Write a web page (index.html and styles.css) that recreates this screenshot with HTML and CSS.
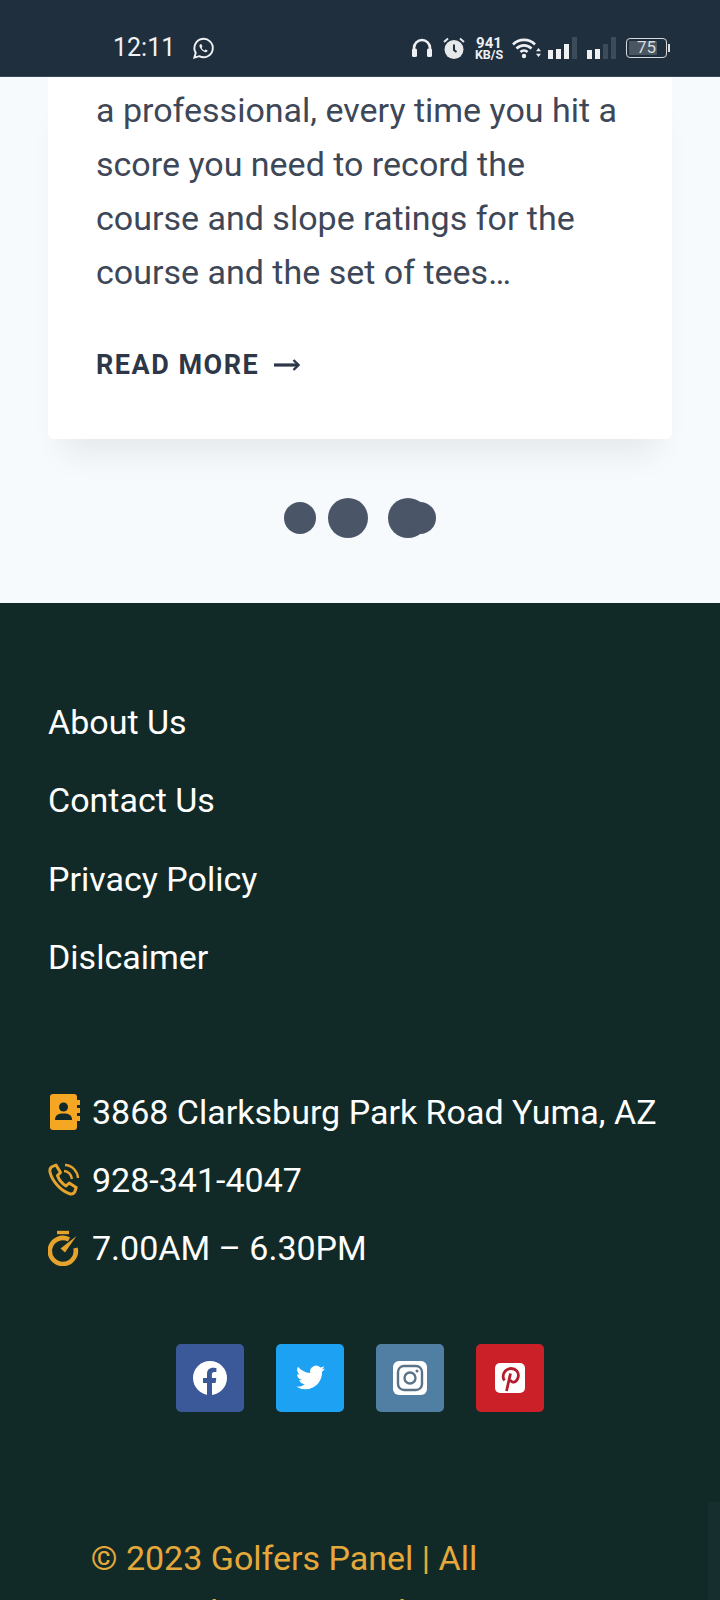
FILE: index.html
```html
<!DOCTYPE html>
<html lang="en">
<head>
    <meta charset="UTF-8">
    <meta name="viewport" content="width=device-width, initial-scale=1.0">
    <title>Golfers Panel</title>
    <link rel="stylesheet" href="styles.css">
</head>
<body>
    <!-- Phone status bar -->
    <div class="status-bar">
        <div class="status-left">
            <span class="clock">12:11</span>
            <svg class="whatsapp" width="23" height="23" viewBox="0 0 24 24" fill="none" stroke="#f0f2f3" stroke-width="2">
                <path d="M2.5 21.5l1.4-5A9.6 9.6 0 1 1 7.6 20z"/>
                <path d="M8.5 7.5c-1 1-1 2.6.4 4.6 1.4 2.1 3.4 3.6 5.2 3.8 1.2.1 2-.6 2.2-1.7l-2.2-1.1-1 1c-1.3-.5-2.5-1.7-3.1-3l.9-1-1-2.5z" fill="#f0f2f3" stroke="none"/>
            </svg>
        </div>
        <div class="status-right">
            <svg class="headphones" width="22" height="20" viewBox="0 0 22 20" fill="none">
                <path d="M3 13V10a8 8 0 0 1 16 0v3" stroke="#eef0f1" stroke-width="2.6"/>
                <rect x="1" y="10.500" width="5" height="8.500" rx="1.500" fill="#eef0f1"/>
                <rect x="16" y="10.500" width="5" height="8.500" rx="1.500" fill="#eef0f1"/>
            </svg>
            <svg class="alarm" width="24" height="22" viewBox="0 0 24 22" fill="none">
                <circle cx="12" cy="12.500" r="9.500" fill="#e6e8e9"/>
                <path d="M12 7.500v5.500l2.500 2" stroke="#1f2f3e" stroke-width="2"/>
                <path d="M2 5l4-3.500M22 5l-4-3.500" stroke="#e6e8e9" stroke-width="2"/>
            </svg>
            <div class="net-speed"><span class="net-num">941</span><span class="net-unit">KB/S</span></div>
            <svg class="wifi" width="30" height="22" viewBox="0 0 30 22" fill="none" stroke="#eef0f1" stroke-width="2.6">
                <path d="M1 7.500a15.500 15.500 0 0 1 22 0"/>
                <path d="M4.500 11.500a10.500 10.500 0 0 1 15 0"/>
                <path d="M8.500 15a5 5 0 0 1 7 0"/>
                <circle cx="12" cy="19" r="2.200" fill="#eef0f1" stroke="none"/>
                <path d="M26.500 11l2.500 3.200h-5zM26.500 20l2.500-3.200h-5z" fill="#eef0f1" stroke="none"/>
            </svg>
            <div class="signal first">
                <i class="bar bar-1"></i><i class="bar bar-2"></i><i class="bar bar-3"></i><i class="bar bar-4 dim"></i>
            </div>
            <div class="signal second">
                <i class="bar bar-1"></i><i class="bar bar-2"></i><i class="bar bar-3 dim"></i><i class="bar bar-4 dim"></i>
            </div>
            <div class="battery">75</div>
            <i class="battery-cap"></i>
        </div>
    </div>

    <!-- Blog slider -->
    <section class="slider">
        <div class="card">
            <p class="card-text">a professional, every time you hit a score you need to record the course and slope ratings for the course and the set of tees…</p>
            <a class="read-more" href="#">READ MORE
                <svg width="26" height="12" viewBox="0 0 26 12" fill="none" stroke="#2d3748">
                    <path d="M0 6h24" stroke-width="3.200"/>
                    <path d="M19.500 1l5 5-5 5" stroke-width="2.400"/>
                </svg>
            </a>
        </div>
        <div class="dots">
            <span class="dot small"></span>
            <span class="dot large"></span>
            <span class="dot-pair"><span class="dot large"></span><span class="dot small behind"></span></span>
        </div>
    </section>

    <footer class="footer">
        <ul class="footer-links">
            <li><a href="#">About Us</a></li>
            <li><a href="#">Contact Us</a></li>
            <li><a href="#">Privacy Policy</a></li>
            <li><a href="#">Dislcaimer</a></li>
        </ul>

        <ul class="contact">
            <li>
                <svg width="32" height="36" viewBox="0 0 32 36">
                    <path d="M5 0h21a3 3 0 0 1 3 3v30a3 3 0 0 1-3 3H5a3 3 0 0 1-3-3V3a3 3 0 0 1 3-3z" fill="#f5a623"/>
                    <path d="M29 6h3v5h-3zM29 14h3v5h-3zM29 22h3v5h-3z" fill="#f5a623"/>
                    <circle cx="15.500" cy="13" r="4.500" fill="#12292a"/>
                    <path d="M7 26c0-5 3-6.500 8.500-6.500S24 21 24 26z" fill="#12292a"/>
                </svg>
                <span>3868 Clarksburg Park Road Yuma, AZ</span>
            </li>
            <li>
                <svg width="32" height="34" viewBox="0 0 32 34" fill="none" stroke="#e5a22c" stroke-width="3" stroke-linejoin="round">
                    <path d="M3.500 4l4.500-2 4.500 7.500-3 3c1.200 4 4.500 8 8.500 10.500l3.200-3 7 4.500-1.500 4.500c-1 1.800-3 2.200-5 1.700C13 28 4 18 2 9c-.3-2 .2-4 1.500-5z"/>
                    <path d="M16 8c4 .2 7.500 3.500 8 8M17 2c7 .3 12.500 6 13 13" stroke-width="2.400"/>
                </svg>
                <span>928-341-4047</span>
            </li>
            <li>
                <svg width="32" height="36" viewBox="0 0 32 36" fill="none" stroke="#e5a22c" stroke-width="4.600">
                    <path d="M9 2.500h12" stroke-width="3.400"/>
                    <path d="M21 9.500A13 13 0 1 0 27.500 18"/>
                    <path d="M12.500 18.500l16-12.500-11.500 16.500z" fill="#e5a22c" stroke="none"/>
                </svg>
                <span>7.00AM – 6.30PM</span>
            </li>
        </ul>

        <div class="social">
            <a class="social-btn facebook" href="#">
                <svg width="34" height="34" viewBox="0 0 34 34">
                    <circle cx="17" cy="17" r="17" fill="#fff"/>
                    <path d="M14 34V22H10v-5h4v-4c0-4 2.400-6.200 6-6.200 1.700 0 3.400.3 3.400.3v4h-2c-2 0-2.500 1.200-2.500 2.500V17h4.400l-.7 5H19v12z" fill="#3b5998"/>
                </svg>
            </a>
            <a class="social-btn twitter" href="#">
                <svg width="29" height="29" viewBox="0 0 24 24" fill="#fff">
                    <path d="M23.950 4.570a10 10 0 0 1-2.820.77 4.960 4.960 0 0 0 2.160-2.720c-.95.550-2 .95-3.130 1.180a4.920 4.920 0 0 0-8.380 4.480C7.690 8.090 4.070 6.130 1.640 3.160a4.820 4.820 0 0 0-.67 2.480c0 1.710.87 3.210 2.190 4.100a4.900 4.900 0 0 1-2.230-.62v.06a4.920 4.920 0 0 0 3.950 4.830 5 5 0 0 1-2.210.08 4.940 4.940 0 0 0 4.600 3.420A9.870 9.870 0 0 1 0 19.540a14 14 0 0 0 7.560 2.210c9.050 0 14-7.500 14-13.980 0-.21 0-.42-.02-.63a9.940 9.940 0 0 0 2.410-2.570z"/>
                </svg>
            </a>
            <a class="social-btn instagram" href="#">
                <svg width="34" height="34" viewBox="0 0 34 34" fill="none">
                    <rect width="34" height="34" rx="6" fill="#fff"/>
                    <rect x="5" y="5" width="24" height="24" rx="6" stroke="#5b7387" stroke-width="2.400"/>
                    <circle cx="17" cy="17" r="5.500" stroke="#5b7387" stroke-width="2.400"/>
                    <circle cx="24" cy="10" r="1.500" fill="#5b7387"/>
                </svg>
            </a>
            <a class="social-btn pinterest" href="#">
                <svg width="30" height="30" viewBox="0 0 30 30" fill="none">
                    <rect width="30" height="30" rx="5" fill="#fff"/>
                    <path d="M9.500 17.500c-3.500-5 .5-12 6.500-12 5 0 8 3.500 7.300 8-.6 4-3.500 6.500-6.300 5.200-1.300-.6-1.800-2-1.800-2" stroke="#b51d2c" stroke-width="2.800"/>
                    <path d="M15.500 10.500L11.500 28" stroke="#b51d2c" stroke-width="2.800"/>
                </svg>
            </a>
        </div>

        <p class="copyright">© 2023 Golfers Panel | All Rights Reserved</p>
        <i class="scroll-thumb"></i>
    </footer>
</body>
</html>
```

FILE: styles.css
```css
* {
    box-sizing: border-box;
}

html, body {
    height: 1600px;
    overflow: hidden;
}

body {
    margin: 0;
    font-family: 'Roboto', sans-serif;
    background: #f7fafc;
}

.status-bar {
    height: 77px;
    padding: 33px 50px 0 113px;
    background: #1f2f3e;
    border-bottom: 1px solid #3a4856;
    display: flex;
    justify-content: space-between;
    color: #f0f2f3;
}

.status-left {
    display: flex;
    align-items: flex-start;
    gap: 17px;
}

.clock {
    font-size: 25px;
    line-height: 30px;
}

.whatsapp {
    margin-top: 4px;
}

.status-right {
    display: flex;
    align-items: flex-start;
    padding-top: 4px;
}

.headphones {
    margin-top: 1px;
}

.alarm {
    margin-left: 9px;
}

.net-speed {
    margin-left: 9px;
    width: 28px;
    display: flex;
    flex-direction: column;
    align-items: center;
    font-weight: 700;
    color: #eef0f1;
}

.net-num {
    font-size: 15px;
    line-height: 12px;
}

.net-unit {
    font-size: 12.500px;
    line-height: 12px;
}

.wifi {
    margin-left: 9px;
}

.signal {
    height: 22px;
    display: flex;
    align-items: flex-end;
    gap: 3px;
}

.signal.first {
    margin-left: 6px;
}

.signal.second {
    margin-left: 10px;
}

.bar {
    width: 5px;
    background: #eef0f1;
}

.bar.dim {
    background: #3c4b59;
}

.bar-1 { height: 9px; }
.bar-2 { height: 10px; }
.bar-3 { height: 15px; }
.bar-4 { height: 22px; }

.battery {
    margin: 1px 0 0 10px;
    width: 41px;
    height: 20px;
    border: 1.500px solid #d7dbde;
    border-radius: 4px;
    background: linear-gradient(to right, #4a5661 78%, transparent 78%);
    background-clip: content-box;
    padding: 2px;
    font-size: 17px;
    line-height: 13px;
    text-align: center;
    color: #d7dbde;
}

.battery-cap {
    margin: 7px 0 0 1px;
    width: 2px;
    height: 8px;
    background: #d7dbde;
}

.slider {
    height: 526px;
    padding: 0 48px;
}

.card {
    height: 362px;
    padding: 6px 48px 0;
    background: #fff;
    border-radius: 0 0 6px 6px;
    box-shadow: 0 28px 30px -14px rgba(0, 0, 0, 0.07);
}

.card-text {
    margin: 0 0 50px;
    font-size: 34px;
    line-height: 54px;
    color: #3d4757;
}

.read-more {
    display: flex;
    align-items: center;
    gap: 15px;
    font-size: 27px;
    font-weight: 700;
    letter-spacing: 1.500px;
    line-height: 32px;
    color: #2d3748;
    text-decoration: none;
}

.dots {
    margin-top: 59px;
    display: flex;
    justify-content: center;
    align-items: center;
    gap: 12px;
}

.dot {
    display: block;
    border-radius: 50%;
    background: #4a5568;
}

.dot.small {
    width: 32px;
    height: 32px;
}

.dot.large {
    width: 40px;
    height: 40px;
}

.dot-pair {
    margin-left: 8px;
    position: relative;
    width: 48px;
    height: 40px;
}

.dot.behind {
    position: absolute;
    top: 4px;
    right: 0;
}

.footer {
    position: relative;
    height: 997px;
    padding: 94px 48px 0;
    background: #122a27;
    color: #fff;
}

.footer-links {
    margin: 0;
    padding: 0;
    list-style: none;
}

.footer-links li {
    height: 78.400px;
    font-size: 34px;
    line-height: 50px;
}

.footer-links a {
    color: #fff;
    text-decoration: none;
}

.contact {
    margin: 67px 0 0;
    padding: 0;
    list-style: none;
}

.contact li {
    height: 68px;
    display: flex;
    align-items: center;
    gap: 12px;
    font-size: 34px;
}

.contact svg {
    flex: none;
}

.social {
    margin-top: 62px;
    display: flex;
    justify-content: center;
    gap: 32px;
}

.social-btn {
    width: 68px;
    height: 68px;
    border-radius: 5px;
    display: flex;
    align-items: center;
    justify-content: center;
}

.facebook { background: #3b5998; }
.twitter { background: #1da1f2; }
.instagram { background: #517fa4; }
.pinterest { background: #cb2027; }

.copyright {
    margin: 119px 152px 0 0;
    font-size: 34px;
    line-height: 54px;
    color: #e5a93b;
    text-align: center;
}

.scroll-thumb {
    position: absolute;
    bottom: 0;
    right: 0;
    width: 12px;
    height: 98px;
    background: #162e2d;
}
```
